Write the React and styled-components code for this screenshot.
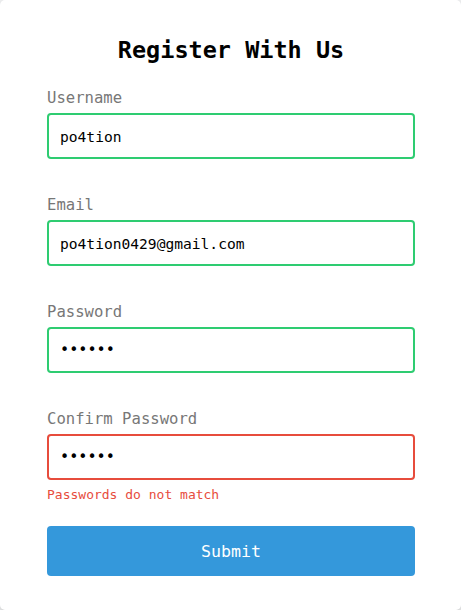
import React from "react";
import styled, { createGlobalStyle } from "styled-components";

const GlobalStyle = createGlobalStyle`
  * { box-sizing: border-box; }
  body {
    margin: 0;
    background: #f9fafb;
    font-family: "DejaVu Sans Mono", "Liberation Mono", monospace;
  }
`;

const Card = styled.div`
  width: 461px;
  height: 610px;
  background: #fff;
  border-radius: 5px;
  box-shadow: 0 2px 10px rgba(0, 0, 0, 0.3);
  overflow: hidden;
`;

const Form = styled.form`
  padding: 36px 46px 0 47px;
  display: flex;
  flex-direction: column;
`;

const Title = styled.h2`
  margin: 0 0 23px;
  font-size: 23.5px;
  line-height: 28px;
  font-weight: 700;
  text-align: center;
  color: #000;
`;

const Control = styled.div`
  display: flex;
  flex-direction: column;
  height: 107px;
`;

const Label = styled.label`
  color: #777;
  font-size: 15.6px;
  line-height: 20px;
  padding-top: 1px;
  margin-bottom: 5px;
`;

const Input = styled.input`
  width: 100%;
  height: 46px;
  padding: 0 11px;
  border: 2px solid ${({ $error }) => ($error ? "#e74c3c" : "#2ecc71")};
  border-radius: 4px;
  font-family: inherit;
  font-size: ${({ type }) => (type === "password" ? "15.2px" : "14.6px")};
  color: #000;
  background: #fff;
  outline: none;
`;

const Message = styled.small`
  margin-top: 6px;
  color: #e74c3c;
  font-size: 13px;
  line-height: 17px;
`;

const Button = styled.button`
  margin-top: 11px;
  width: 100%;
  height: 50px;
  background: #3498db;
  border: none;
  border-radius: 4px;
  color: #fff;
  font-family: inherit;
  font-size: 16.6px;
  cursor: pointer;
`;

const fields = [
  { id: "username", label: "Username", type: "text", value: "po4tion" },
  { id: "email", label: "Email", type: "text", value: "po4tion0429@gmail.com" },
  { id: "password", label: "Password", type: "password", value: "123456" },
  {
    id: "password2",
    label: "Confirm Password",
    type: "password",
    value: "123457",
    error: "Passwords do not match",
  },
];

export default function App() {
  return (
    <>
      <GlobalStyle />
      <Card>
        <Form onSubmit={(e) => e.preventDefault()}>
          <Title>Register With Us</Title>
          {fields.map((f) => (
            <Control key={f.id}>
              <Label htmlFor={f.id}>{f.label}</Label>
              <Input id={f.id} type={f.type} defaultValue={f.value} $error={!!f.error} />
              {f.error && <Message>{f.error}</Message>}
            </Control>
          ))}
          <Button type="submit">Submit</Button>
        </Form>
      </Card>
    </>
  );
}
